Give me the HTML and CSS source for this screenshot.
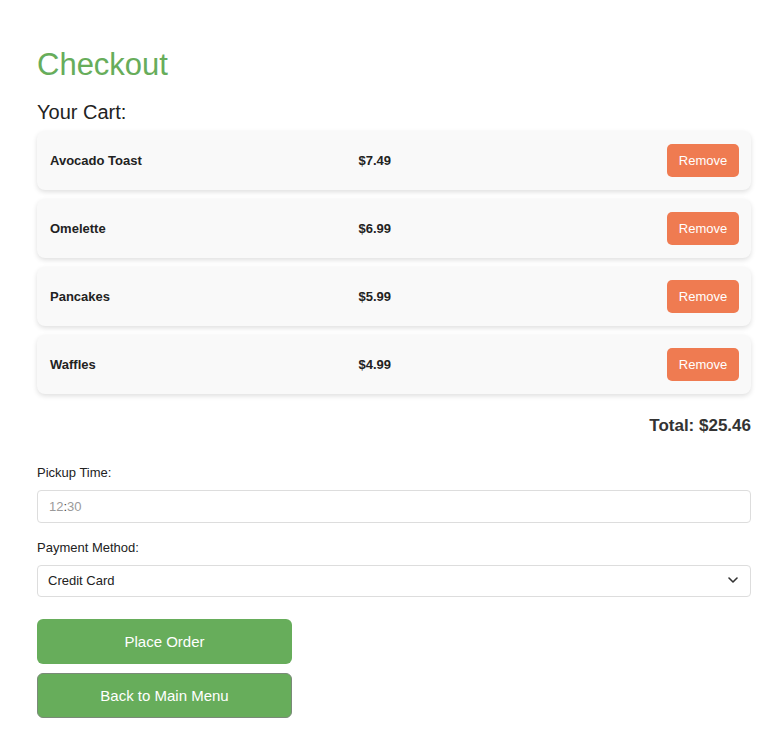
FILE: index.html
```html
<!DOCTYPE html>
<html lang="en">
<head>
<meta charset="utf-8">
<title>Checkout</title>
<link rel="stylesheet" href="styles.css">
</head>
<body>
<main class="page">
  <h1 class="title">Checkout</h1>
  <h2 class="subtitle">Your Cart:</h2>
  <ul class="cart">
    <li class="item"><span class="name">Avocado Toast</span><span class="price">$7.49</span><button class="remove">Remove</button></li>
    <li class="item"><span class="name">Omelette</span><span class="price">$6.99</span><button class="remove">Remove</button></li>
    <li class="item"><span class="name">Pancakes</span><span class="price">$5.99</span><button class="remove">Remove</button></li>
    <li class="item"><span class="name">Waffles</span><span class="price">$4.99</span><button class="remove">Remove</button></li>
  </ul>
  <div class="total">Total: $25.46</div>
  <form class="form">
    <label class="label">Pickup Time:</label>
    <div class="field time"><span class="dim">12</span><span class="colon">:</span><span class="dim">30</span></div>
    <label class="label">Payment Method:</label>
    <div class="field select">
      <span>Credit Card</span>
      <svg class="chev" width="10" height="6" viewBox="0 0 10 6"><path d="M1 1l4 4 4-4" fill="none" stroke="#333" stroke-width="1.6" stroke-linecap="round" stroke-linejoin="round"/></svg>
    </div>
    <div class="actions">
      <button type="button" class="btn">Place Order</button>
      <button type="button" class="btn btn-back">Back to Main Menu</button>
    </div>
  </form>
</main>
</body>
</html>
```
FILE: styles.css
```css
* { box-sizing: border-box; }
body {
  margin: 0;
  background: #fff;
  font-family: "Liberation Sans", Arial, Helvetica, sans-serif;
  color: #222;
}
.page {
  padding: 47px 11px 20px 37px;
}
.title {
  margin: 0 0 19px;
  font-size: 31px;
  line-height: 35px;
  font-weight: 400;
  color: #67ad5b;
}
.subtitle {
  margin: 0 0 7px;
  font-size: 20px;
  line-height: 23px;
  font-weight: 400;
  color: #222;
}
.cart {
  list-style: none;
  margin: 0;
  padding: 0;
  display: flex;
  flex-direction: column;
  gap: 9px;
}
.item {
  display: flex;
  align-items: center;
  height: 59px;
  padding: 0 12px 0 13px;
  background: #f9f9f9;
  border-radius: 8px;
  box-shadow: 0 2px 5px rgba(0,0,0,0.13);
  font-size: 13px;
  font-weight: 700;
  color: #222;
}
.name, .price { flex: 1; }
.remove {
  width: 72px;
  height: 33px;
  border: none;
  border-radius: 5px;
  background: #ef7b51;
  color: #fff;
  font-family: inherit;
  font-size: 13px;
  padding: 0;
}
.total {
  margin-top: 22px;
  text-align: right;
  font-size: 17px;
  line-height: 19px;
  font-weight: 700;
  color: #333;
}
.form {
  margin-top: 30px;
  display: flex;
  flex-direction: column;
}
.label {
  font-size: 13px;
  line-height: 15px;
  color: #222;
  margin-bottom: 10px;
}
.field {
  height: 33px;
  border: 1px solid #ddd;
  border-radius: 4px;
  background: #fff;
  display: flex;
  align-items: center;
  padding: 0 11px;
  font-size: 13px;
  margin-bottom: 17px;
}
.time .dim { color: #9a9a9a; }
.time .colon { color: #444; }
.select {
  height: 32px;
  justify-content: space-between;
  color: #222;
  padding: 0 12px 2px 10px;
  margin-bottom: 22px;
}
.actions {
  display: flex;
  flex-direction: column;
  gap: 9px;
  align-items: flex-start;
}
.btn {
  width: 255px;
  height: 45px;
  border: none;
  border-radius: 6px;
  background: #67ad5b;
  color: #fff;
  font-family: inherit;
  font-size: 15px;
}
.btn-back {
  border: 1px solid #7a8a78;
}
```
